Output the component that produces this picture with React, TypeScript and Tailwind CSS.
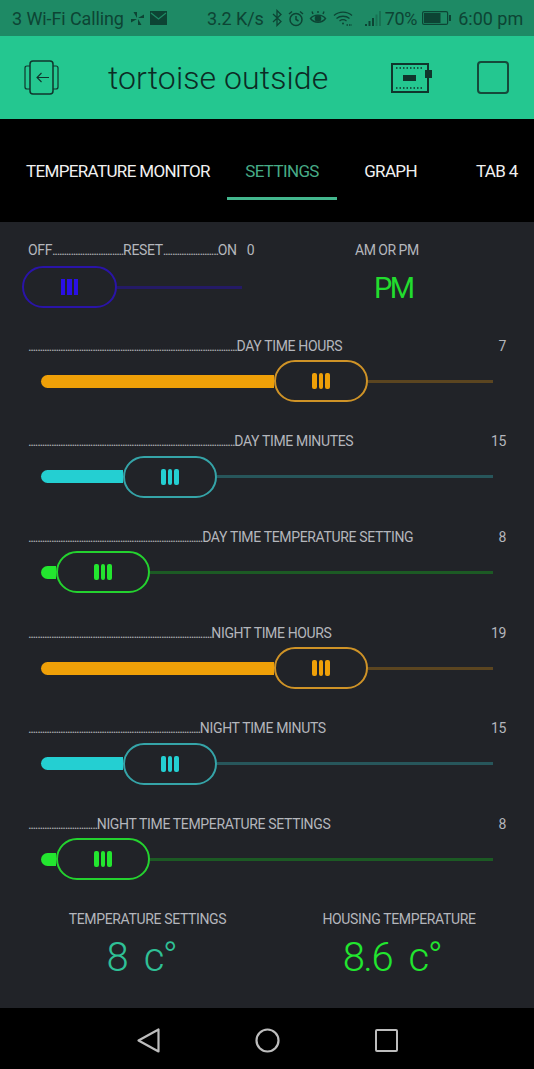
import React from 'react';

const Dots = ({ width }: { width: number }) => (
  <span className="tracking-[-1.4px] text-[#a9abb1]">{'.'.repeat(Math.round(width / 2.3))}</span>
);

const Grip = ({ className }: { className: string }) => (
  <span className="flex gap-[2px]">
    <span className={`w-[4.5px] h-[16px] rounded-[2px] ${className}`} />
    <span className={`w-[4.5px] h-[16px] rounded-[2px] ${className}`} />
    <span className={`w-[4.5px] h-[16px] rounded-[2px] ${className}`} />
  </span>
);

const themes = {
  orange: { bar: 'bg-[#efa008]', line: 'bg-[#5b4520]', border: 'border-[#cf9327]' },
  cyan: { bar: 'bg-[#24cfd2]', line: 'bg-[#27565b]', border: 'border-[#35a4a8]' },
  green: { bar: 'bg-[#23e62f]', line: 'bg-[#1c5a24]', border: 'border-[#24d22f]' },
};

const SliderRow = ({ dots, label, value, fill, theme }: { dots: number; label: string; value: string; fill: number; theme: keyof typeof themes }) => {
  const t = themes[theme];
  return (
    <div className="flex flex-col gap-[4px]">
      <div className="h-5 pl-[28px] pr-[28px] flex items-center justify-between text-[14px] text-[#b4b6bc] tracking-[-0.35px] whitespace-nowrap">
        <span><Dots width={dots} />{label}</span>
        <span>{value}</span>
      </div>
      <div className="h-[42px] mx-[41px] flex items-center">
        <div className={`h-[13px] rounded-l-full ${t.bar}`} style={{ width: fill }} />
        <div className={`w-[94px] h-[42px] shrink-0 rounded-full border-2 flex items-center justify-center ${t.border}`}>
          <Grip className={t.bar} />
        </div>
        <div className={`flex-1 h-[3px] ${t.line}`} />
      </div>
    </div>
  );
};

const sliders = [
  { dots: 210, label: 'DAY TIME HOURS', value: '7', fill: 233, theme: 'orange' as const },
  { dots: 207, label: 'DAY TIME MINUTES', value: '15', fill: 82, theme: 'cyan' as const },
  { dots: 175, label: 'DAY TIME TEMPERATURE SETTING', value: '8', fill: 15, theme: 'green' as const },
  { dots: 184, label: 'NIGHT TIME HOURS', value: '19', fill: 233, theme: 'orange' as const },
  { dots: 172, label: 'NIGHT TIME MINUTS', value: '15', fill: 82, theme: 'cyan' as const },
  { dots: 68, label: 'NIGHT TIME TEMPERATURE SETTINGS', value: '8', fill: 15, theme: 'green' as const },
];

const StatusBar = () => (
  <div className="h-[36px] shrink-0 bg-[#1e8a65] flex items-center pl-[12px] text-[18px] text-[#0d4434] whitespace-nowrap">
    <span className="tracking-[-0.1px]">3 Wi-Fi Calling</span>
    {/* pinwheel */}
    <svg className="ml-[6px]" width="15" height="15" viewBox="0 0 15 15" fill="#0d4434">
      <path d="M7 7 L7 1 L3.5 1 Z M8 7 L14 7 L14 3.5 Z M8 8 L8 14 L11.5 14 Z M7 8 L1 8 L1 11.5 Z" />
    </svg>
    <svg className="ml-[5px]" width="17" height="14" viewBox="0 0 17 14">
      <rect width="17" height="14" fill="#0d4434" />
      <path d="M1 2 L8.5 8 L16 2" fill="none" stroke="#1e8a65" strokeWidth="1.3" />
    </svg>
    <span className="ml-[40px] tracking-[-0.1px]">3.2 K/s</span>
    <svg className="ml-[8px]" width="10" height="18" viewBox="0 0 10 18" fill="none" stroke="#0d4434" strokeWidth="1.3">
      <path d="M1 5 L9 12.5 L5 16.5 V1.5 L9 5.5 L1 13" />
    </svg>
    <svg className="ml-[6px]" width="16" height="17" viewBox="0 0 16 17" fill="none" stroke="#0d4434" strokeWidth="1.5">
      <circle cx="8" cy="9.5" r="6" />
      <path d="M8 6 V9.5 L10.5 11 M1 4 L4 1.5 M15 4 L12 1.5" />
    </svg>
    <svg className="ml-[5px]" width="18" height="16" viewBox="0 0 18 16" fill="none" stroke="#0d4434" strokeWidth="1.4">
      <path d="M1.5 8.5 C5 4 13 4 16.5 8.5 C13 13.5 5 13.5 1.5 8.5 Z" />
      <circle cx="9" cy="8.5" r="2.6" fill="#0d4434" />
      <path d="M4 4 L3 1.5 M9 3 V1 M14 4 L15 1.5" />
    </svg>
    <svg className="ml-[6px]" width="20" height="17" viewBox="0 0 20 17" fill="none" stroke="#0d4434" strokeWidth="1.3">
      <path d="M1 5.5 C6 1 14 1 19 5.5 M3.5 8.5 C7 5.5 13 5.5 16.5 8.5 M6.5 11 C8.5 9.5 11.5 9.5 13.5 11" />
      <circle cx="10" cy="13.5" r="1" fill="#0d4434" stroke="none" />
      <path d="M13.5 15 H19" strokeWidth="1.5" strokeDasharray="1.5 1" />
    </svg>
    <svg className="ml-[12px]" width="17" height="17" viewBox="0 0 17 17" fill="#0d4434">
      <rect x="0" y="14" width="2" height="2" />
      <rect x="3.5" y="11" width="2" height="5" />
      <rect x="7" y="8" width="2" height="8" />
      <rect x="10.5" y="4.5" width="2" height="11.5" opacity="0.35" />
      <rect x="14" y="1" width="2" height="15" opacity="0.35" />
    </svg>
    <span className="ml-[3px] tracking-[-0.3px]">70%</span>
    <svg className="ml-[5px]" width="29" height="14" viewBox="0 0 29 14" fill="none">
      <rect x="0.6" y="0.6" width="25" height="12.8" rx="1.5" stroke="#0d4434" strokeWidth="1.2" />
      <rect x="2" y="2" width="16.5" height="10" fill="#0d4434" />
      <rect x="27" y="4" width="2" height="6" fill="#0d4434" />
    </svg>
    <span className="ml-[7px]">6:00 pm</span>
  </div>
);

const Header = () => (
  <div className="h-[83px] shrink-0 bg-[#24c790] flex items-center pl-[24px] text-[#0c2c25]">
    <svg width="36" height="35" viewBox="0 0 36 35" fill="none" stroke="#10352c" strokeWidth="1.5">
      <rect x="6" y="1" width="23" height="33" rx="3" />
      <path d="M6 6 H3 Q1 6 1 8 V27 Q1 29 3 29 H6 M29 6 H32 Q34 6 34 8 V27 Q34 29 32 29 H29" strokeWidth="1.2" />
      <path d="M25 17.5 H13 M17.5 13 L13 17.5 L17.5 22" strokeWidth="1.1" />
    </svg>
    <span className="ml-[48px] w-[283px] text-[32px] font-light tracking-[0.1px] whitespace-nowrap">tortoise outside</span>
    <svg width="42" height="32" viewBox="0 0 42 32" fill="none">
      <path d="M1 2 H37 V30 H1 Z" stroke="#10352c" strokeWidth="2" />
      <rect x="34" y="8" width="7" height="8" fill="#10352c" />
      <rect x="12" y="13" width="13" height="6" fill="#10352c" />
      <path d="M5 6 H33 M5 26 H33" stroke="#10352c" strokeWidth="1.4" strokeDasharray="1.5 2" />
    </svg>
    <div className="ml-[44px] w-[32px] h-[33px] rounded-[4px] border-2 border-[#16493a]" />
  </div>
);

const Tabs = () => (
  <div className="h-[103px] shrink-0 bg-black flex pl-[26px] pt-[41px] text-[17px] text-[#f1f1f1] tracking-[-0.65px] whitespace-nowrap">
    <div className="w-[184px] h-[24px] flex items-center">TEMPERATURE MONITOR</div>
    <div className="ml-[17px] w-[110px]">
      <div className="h-[24px] flex items-center justify-center text-[#47ab87]">SETTINGS</div>
      <div className="mt-[13px] h-[3px] bg-[#43b78e]" />
    </div>
    <div className="w-[107px] h-[24px] flex items-center justify-center">GRAPH</div>
    <div className="ml-[32px] h-[24px] flex items-center">TAB 4</div>
  </div>
);

const NavBar = () => (
  <div className="h-[61px] shrink-0 bg-black flex items-center justify-center gap-[95px] pt-[4px]">
    <svg width="23" height="25" viewBox="0 0 23 25" fill="none" stroke="#bdbdbd" strokeWidth="2.2" strokeLinejoin="round">
      <path d="M21.5 1.5 V23.5 L1.5 12.5 Z" />
    </svg>
    <svg width="25" height="25" viewBox="0 0 25 25" fill="none" stroke="#bdbdbd" strokeWidth="2.2">
      <circle cx="12.5" cy="12.5" r="11" />
    </svg>
    <div className="w-[23px] h-[23px] rounded-[2px] border-2 border-[#bdbdbd]" />
  </div>
);

export default function App() {
  return (
    <div className="w-[534px] h-[1069px] flex flex-col overflow-hidden bg-[#212328] [font-family:Roboto,sans-serif]">
      <StatusBar />
      <Header />
      <Tabs />

      <div className="flex-1 pt-[18px] flex flex-col">
        {/* top row: switch + AM/PM */}
        <div className="flex h-[68px]">
          <div className="w-[330px] flex flex-col gap-[6px] shrink-0">
            <div className="h-5 pl-[28px] flex items-center text-[14px] text-[#b4b6bc] tracking-[-0.35px] whitespace-nowrap">
              OFF<Dots width={72} />RESET<Dots width={55} />ON<span className="ml-[10px]">0</span>
            </div>
            <div className="h-[42px] pl-[22px] flex items-center">
              <div className="w-[95px] h-[42px] shrink-0 rounded-full border-2 border-[#2a14a8] flex items-center justify-center">
                <Grip className="bg-[#2a10e6] rounded-none" />
              </div>
              <div className="w-[125px] h-[3px] bg-[#241a66]" />
            </div>
          </div>
          <div className="flex-1 flex flex-col">
            <div className="h-5 pl-[25px] flex items-center text-[14px] text-[#b4b6bc] tracking-[-0.5px] whitespace-nowrap">AM OR PM</div>
            <div className="mt-[9px] pl-[44px] text-[29px] leading-[38px] tracking-[-2.5px] text-[#22dc2e]">PM</div>
          </div>
        </div>

        <div className="mt-[28px] flex flex-col gap-[29.7px]">
          {sliders.map(s => (
            <SliderRow key={s.label} {...s} />
          ))}
        </div>

        {/* value displays */}
        <div className="mt-[29px] flex text-center">
          <div className="w-[295px] flex flex-col">
            <div className="h-5 flex items-center justify-center text-[14px] text-[#b4b6bc] tracking-[-0.35px] whitespace-nowrap">TEMPERATURE SETTINGS</div>
            <div className="mt-[5px] pr-[12px] text-[40px] leading-[48px] font-light tracking-[-1.5px] text-[#2fc096] whitespace-pre">8  c°</div>
          </div>
          <div className="w-[208px] flex flex-col">
            <div className="h-5 flex items-center justify-center text-[14px] text-[#b4b6bc] tracking-[-0.35px] whitespace-nowrap">HOUSING TEMPERATURE</div>
            <div className="mt-[5px] pr-[14px] text-[40px] leading-[48px] font-light tracking-[-1.5px] text-[#22e62f] whitespace-pre">8.6  c°</div>
          </div>
        </div>
      </div>

      <NavBar />
    </div>
  );
}
